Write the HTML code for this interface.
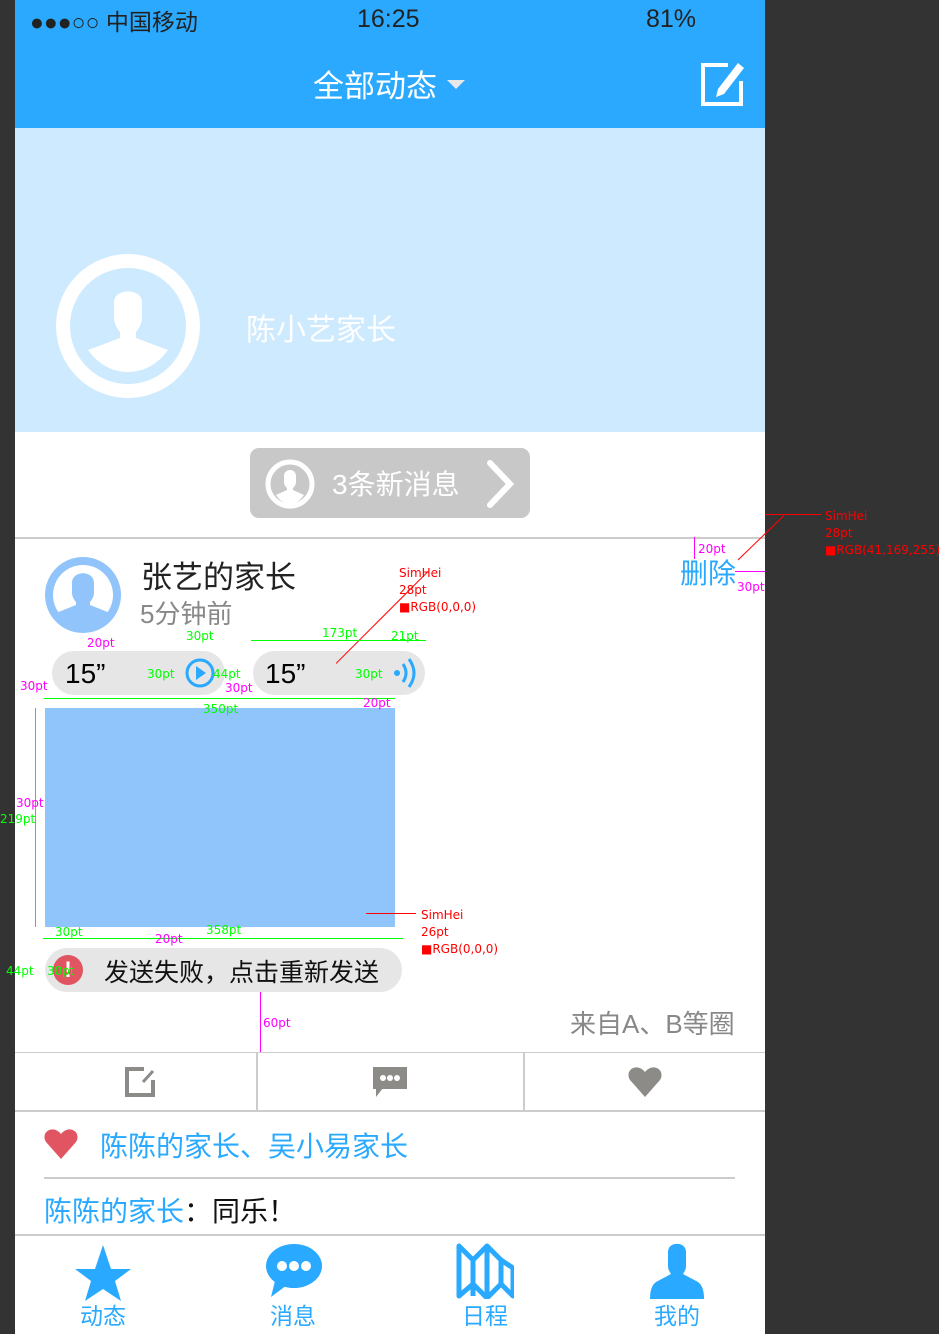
<!DOCTYPE html>
<html><head><meta charset="utf-8"><style>
*{margin:0;padding:0;box-sizing:border-box}
body{width:939px;height:1334px;background:#333;position:relative;overflow:hidden;font-family:"Liberation Sans","Noto Sans CJK SC",sans-serif}
.a{position:absolute;white-space:nowrap}
.ann{position:absolute;font-size:12px;font-family:"DejaVu Sans",sans-serif;white-space:nowrap}
.g{color:#0f0}.m{color:#f0f}.r{color:#f00}
</style></head><body>
<div class="a" style="left:15px;top:0;width:750px;height:1334px;background:#fff"></div>
<div class="a" style="left:15px;top:0;width:750px;height:128px;background:#2aa9ff"></div>
<div class="a" style="left:30px;top:3px;font-size:23px;color:#222">●●●○○ 中国移动</div>
<div class="a" style="left:357px;top:5px;font-size:25px;color:#222">16:25</div>
<div class="a" style="left:646px;top:5px;font-size:25px;color:#222">81%</div>
<div class="a" style="left:313px;top:61px;font-size:31px;color:#fff">全部动态</div>
<div class="a" style="left:447px;top:80px;width:0;height:0;border-left:9px solid transparent;border-right:9px solid transparent;border-top:9px solid #e8e8e8"></div>
<svg class="a" style="left:700px;top:61px" width="46" height="46" viewBox="0 0 46 46"><path d="M28 4H3v39h38V20" fill="none" stroke="#fff" stroke-width="4"/><path d="M38 2l6 5-20 26-8 3 2-8z" fill="#fff"/></svg>
<div class="a" style="left:15px;top:128px;width:750px;height:304px;background:#cdeaff"></div>
<svg class="a" style="left:56px;top:254px" width="144" height="144" viewBox="0 0 144 144"><circle cx="72" cy="72" r="72" fill="#fff"/><circle cx="72" cy="72" r="58" fill="#cdeaff"/><path d="M58 48c0-14 28-14 28 0v16c0 6-4 12-6 14v6l32 12c-10 14-24 22-40 22S42 110 32 96l32-12v-6c-2-2-6-8-6-14z" fill="#fff"/></svg>
<div class="a" style="left:246px;top:305px;font-size:30px;color:#fff">陈小艺家长</div>
<div class="a" style="left:250px;top:448px;width:280px;height:70px;background:#c8c8c8;border-radius:9px"></div>
<svg class="a" style="left:265px;top:459px" width="50" height="50" viewBox="0 0 50 50"><circle cx="25" cy="25" r="22" fill="none" stroke="#fff" stroke-width="5"/><path d="M19 17c0-8 12-8 12 0v6c0 3-2 5-3 6v2l11 5c-4 6-9 9-14 9s-10-3-14-9l11-5v-2c-1-1-3-3-3-6z" fill="#fff"/></svg>
<div class="a" style="left:332px;top:463px;font-size:28px;color:#fff">3条新消息</div>
<svg class="a" style="left:485px;top:459px" width="32" height="50"><path d="M5 4l20 21L5 46" fill="none" stroke="#fff" stroke-width="6" stroke-linecap="round"/></svg>
<div class="a" style="left:15px;top:537px;width:750px;height:2px;background:#ccc"></div>
<svg class="a" style="left:45px;top:557px" width="76" height="76" viewBox="0 0 76 76"><circle cx="38" cy="38" r="38" fill="#90c4fb"/><circle cx="38" cy="38" r="30" fill="#fff"/><path d="M27 26c0-13 22-13 22 0v10c0 4-3 8-4 9v3l20 8c-6 10-16 14-27 14S17 66 11 56l20-8v-3c-1-1-4-5-4-9z" fill="#90c4fb"/></svg>
<div class="a" style="left:141px;top:552px;font-size:31px;color:#222">张艺的家长</div>
<div class="a" style="left:140px;top:594px;font-size:26px;color:#888">5分钟前</div>
<div class="a" style="left:680px;top:552px;font-size:28px;color:#29a9ff">删除</div>
<div class="a" style="left:52px;top:651px;width:173px;height:44px;background:#e6e6e6;border-radius:22px"></div>
<div class="a" style="left:65px;top:658px;font-size:28px;color:#000">15”</div>
<svg class="a" style="left:184px;top:657px" width="32" height="32"><circle cx="16" cy="16" r="13" fill="none" stroke="#29a9ff" stroke-width="3"/><path d="M12 9l10 7-10 7z" fill="#29a9ff"/></svg>
<div class="a" style="left:253px;top:651px;width:172px;height:44px;background:#e6e6e6;border-radius:22px"></div>
<div class="a" style="left:265px;top:658px;font-size:28px;color:#000">15”</div>
<svg class="a" style="left:393px;top:656px" width="24" height="34"><circle cx="4" cy="17" r="3" fill="#29a9ff"/><path d="M10 8q6 9 0 18M16 3q10 14 0 28" fill="none" stroke="#29a9ff" stroke-width="3"/></svg>
<div class="a" style="left:45px;top:708px;width:350px;height:219px;background:#90c5fb"></div>
<div class="a" style="left:45px;top:948px;width:357px;height:44px;background:#e6e6e6;border-radius:22px"></div>
<div class="a" style="left:53px;top:955px;width:30px;height:30px;border-radius:50%;background:#e05561;color:#fff;font-weight:bold;font-size:22px;text-align:center;line-height:30px">!</div>
<div class="a" style="left:104px;top:953px;font-size:25px;color:#111">发送失败，点击重新发送</div>
<div class="a" style="left:570px;top:1004px;font-size:26px;color:#888">来自A、B等圈</div>
<div class="a" style="left:15px;top:1052px;width:750px;height:1px;background:#ccc"></div>
<div class="a" style="left:256px;top:1052px;width:2px;height:59px;background:#ccc"></div>
<div class="a" style="left:523px;top:1052px;width:2px;height:59px;background:#ccc"></div>
<div class="a" style="left:15px;top:1110px;width:750px;height:2px;background:#ccc"></div>
<svg class="a" style="left:124px;top:1066px" width="32" height="32"><path d="M20 3H3v26h26V14" fill="none" stroke="#8c8b88" stroke-width="4"/><path d="M19 16l10-11" stroke="#8c8b88" stroke-width="3"/></svg>
<svg class="a" style="left:372px;top:1066px" width="36" height="32"><rect x="1" y="1" width="34" height="22" fill="#8c8b88"/><path d="M4 22l0 9 7-9z" fill="#8c8b88"/><circle cx="11" cy="12" r="3" fill="#fff"/><circle cx="18" cy="12" r="3" fill="#fff"/><circle cx="25" cy="12" r="3" fill="#fff"/></svg>
<svg class="a" style="left:627px;top:1066px" width="36" height="32" viewBox="0 0 36 32"><path d="M18 31L3 14C-3 4 10-4 18 6 26-4 39 4 33 14z" fill="#8c8b88"/></svg>
<svg class="a" style="left:43px;top:1128px" width="36" height="32" viewBox="0 0 36 32"><path d="M18 31L3 14C-3 4 10-4 18 6 26-4 39 4 33 14z" fill="#e05561"/></svg>
<div class="a" style="left:100px;top:1125px;font-size:28px;color:#29a9ff">陈陈的家长、吴小易家长</div>
<div class="a" style="left:44px;top:1177px;width:691px;height:2px;background:#ccc"></div>
<div class="a" style="left:44px;top:1190px;font-size:28px;color:#29a9ff">陈陈的家长<span style="color:#111">：同乐！</span></div>
<div class="a" style="left:15px;top:1234px;width:750px;height:2px;background:#ccc"></div>
<svg class="a" style="left:74px;top:1244px" width="58" height="58" viewBox="0 0 58 58"><path d="M29 1l8 24h20l-16 12 6 20-18-12-18 12 6-20L1 25h20z" fill="#29a9ff"/></svg>
<svg class="a" style="left:265px;top:1243px" width="58" height="56" viewBox="0 0 58 56"><ellipse cx="29" cy="23" rx="28" ry="22" fill="#29a9ff"/><path d="M10 38l-4 16 16-12z" fill="#29a9ff"/><circle cx="17" cy="23" r="5" fill="#fff"/><circle cx="29" cy="23" r="5" fill="#fff"/><circle cx="41" cy="23" r="5" fill="#fff"/></svg>
<svg class="a" style="left:456px;top:1243px" width="58" height="56" viewBox="0 0 58 56"><path d="M3 3l14 14 14-14 14 14 12 8v28l-12-12-14 14-14-14L3 53z" fill="none" stroke="#29a9ff" stroke-width="5" stroke-linejoin="round"/><path d="M17 17v36M31 3v50M45 17v24" stroke="#29a9ff" stroke-width="5"/></svg>
<svg class="a" style="left:648px;top:1244px" width="58" height="56" viewBox="0 0 58 56"><path d="M20 8c0-11 18-11 18 0v14c0 4-2 6-3 8l15 8c4 3 6 8 6 17H2c0-9 2-14 6-17l15-8c-1-2-3-4-3-8z" fill="#29a9ff"/></svg>
<div class="a" style="left:80px;top:1297px;font-size:23px;color:#29a9ff">动态</div>
<div class="a" style="left:270px;top:1297px;font-size:23px;color:#29a9ff">消息</div>
<div class="a" style="left:462px;top:1297px;font-size:23px;color:#29a9ff">日程</div>
<div class="a" style="left:654px;top:1297px;font-size:23px;color:#29a9ff">我的</div>
<!-- annotations -->
<div class="ann r" style="left:825px;top:508px;line-height:17px">SimHei<br>28pt<br>■RGB(41,169,255)</div>
<div class="a" style="left:765px;top:514px;width:56px;height:1px;background:#f00"></div>
<div class="a" style="left:720px;top:515px;width:64px;height:1px;background:#f00;transform:rotate(-44deg);transform-origin:right"></div>
<div class="a" style="left:694px;top:537px;width:1px;height:22px;background:#f0f"></div>
<div class="ann m" style="left:698px;top:542px">20pt</div>
<div class="a" style="left:735px;top:571px;width:30px;height:1px;background:#f0f"></div>
<div class="ann m" style="left:737px;top:580px">30pt</div>
<div class="ann r" style="left:399px;top:565px;line-height:17px">SimHei<br>28pt<br>■RGB(0,0,0)</div>
<div class="a" style="left:298px;top:571px;width:130px;height:1px;background:#f00;transform:rotate(-45deg);transform-origin:right"></div>
<div class="ann r" style="left:421px;top:907px;line-height:17px">SimHei<br>26pt<br>■RGB(0,0,0)</div>
<div class="a" style="left:366px;top:913px;width:50px;height:1px;background:#f00"></div>
<div class="ann g" style="left:322px;top:626px">173pt</div>
<div class="a" style="left:251px;top:640px;width:175px;height:1px;background:#0f0"></div>
<div class="ann g" style="left:391px;top:629px">21pt</div>
<div class="ann g" style="left:186px;top:629px">30pt</div>
<div class="ann m" style="left:87px;top:636px">20pt</div>
<div class="ann g" style="left:147px;top:667px">30pt</div>
<div class="ann g" style="left:355px;top:667px">30pt</div>
<div class="ann g" style="left:213px;top:667px">44pt</div>
<div class="ann m" style="left:225px;top:681px">30pt</div>
<div class="ann m" style="left:20px;top:679px">30pt</div>
<div class="a" style="left:44px;top:698px;width:351px;height:1px;background:#0f0"></div>
<div class="ann g" style="left:203px;top:702px">350pt</div>
<div class="ann m" style="left:363px;top:696px">20pt</div>
<div class="a" style="left:35px;top:708px;width:1px;height:219px;background:#0f0"></div>
<div class="ann m" style="left:16px;top:796px">30pt</div>
<div class="ann g" style="left:0;top:812px">219pt</div>
<div class="a" style="left:43px;top:938px;width:360px;height:1px;background:#0f0"></div>
<div class="ann g" style="left:55px;top:925px">30pt</div>
<div class="ann g" style="left:206px;top:923px">358pt</div>
<div class="ann m" style="left:155px;top:932px">20pt</div>
<div class="ann g" style="left:6px;top:964px">44pt</div>
<div class="ann g" style="left:47px;top:964px">30pt</div>
<div class="a" style="left:260px;top:992px;width:1px;height:60px;background:#f0f"></div>
<div class="ann m" style="left:263px;top:1016px">60pt</div>
</body></html>
